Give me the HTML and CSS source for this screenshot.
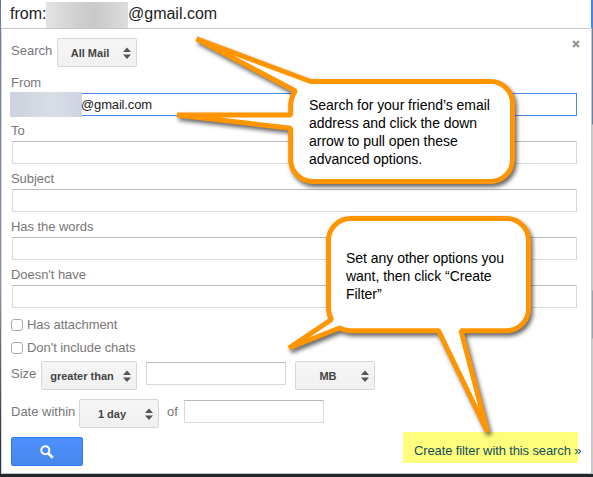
FILE: index.html
```
<!DOCTYPE html>
<html lang="en">
<head>
<meta charset="utf-8">
<title>Search options</title>
<link rel="stylesheet" href="styles.css">
</head>
<body>
<div class="page">
  <div class="query"><span class="prefix">from:</span><span class="redacted"></span><span>@gmail.com</span></div>
  <form class="panel">
    <div class="row scope">
      <span class="label">Search</span>
      <div class="select"><b>All Mail</b><svg class="arrows" viewBox="0 0 8 12"><path d="M0 5 4 0.5 8 5zM0 7.5h8L4 12z"/></svg></div>
      <svg class="close" viewBox="0 0 8 8"><path d="M1 1 7 7M7 1 1 7"/></svg>
    </div>
    <div class="field"><span class="label">From</span><div class="input focused"><span class="redacted small"></span><span>@gmail.com</span></div></div>
    <div class="field"><span class="label">To</span><div class="input"></div></div>
    <div class="field"><span class="label">Subject</span><div class="input"></div></div>
    <div class="field"><span class="label">Has the words</span><div class="input"></div></div>
    <div class="field"><span class="label">Doesn't have</span><div class="input"></div></div>
    <div class="check first"><span class="box"></span><span>Has attachment</span></div>
    <div class="check"><span class="box"></span><span>Don't include chats</span></div>
    <div class="row size">
      <span class="label">Size</span>
      <div class="select wide"><b>greater than</b><svg class="arrows" viewBox="0 0 8 12"><path d="M0 5 4 0.5 8 5zM0 7.5h8L4 12z"/></svg></div>
      <div class="input short"></div>
      <div class="select"><b>MB</b><svg class="arrows" viewBox="0 0 8 12"><path d="M0 5 4 0.5 8 5zM0 7.5h8L4 12z"/></svg></div>
    </div>
    <div class="row date">
      <span class="label">Date within</span>
      <div class="select"><b>1 day</b><svg class="arrows" viewBox="0 0 8 12"><path d="M0 5 4 0.5 8 5zM0 7.5h8L4 12z"/></svg></div>
      <span class="label of">of</span>
      <div class="input short"></div>
    </div>
    <div class="actions">
      <div class="submit"><svg viewBox="0 0 14 14"><circle cx="5.3" cy="5.2" r="4" fill="none" stroke="#fff" stroke-width="2"/><path d="M8.2 8.2 12.8 12.8" stroke="#fff" stroke-width="2.7"/></svg></div>
      <div class="create"><span>Create filter with this search »</span></div>
    </div>
  </form>
</div>
<svg class="callouts" viewBox="0 0 593 477">
  <path d="M196.500 38.800 310.500 81.500H490.500A22 22 0 0 1 512.500 103.500V159.500A22 22 0 0 1 490.500 181.500H312.700A22 22 0 0 1 290.700 159.500V128.300L177 115H290.700V106Q291 96 295.500 91Z"/>
  <path d="M289 348 331.500 319.500Q328.500 314 328.500 308V240.500A22 22 0 0 1 350.500 218.500H506.500A22 22 0 0 1 528.500 240.500V308.700A22 22 0 0 1 506.500 330.700H461L487.500 432 438.500 330.700H350Q345 330.700 339.500 328Z"/>
</svg>
<div class="note one">Search for your friend’s email<br>address and click the down<br>arrow to pull open these<br>advanced options.</div>
<div class="note two">Set any other options you<br>want, then click “Create<br>Filter”</div>
</body>
</html>
```
FILE: styles.css
```
* { box-sizing: border-box; }
body {
  margin: 0;
  width: 593px;
  height: 477px;
  overflow: hidden;
  position: relative;
  font-family: "Liberation Sans", Arial, sans-serif;
  font-size: 13px;
  color: #777;
  background: linear-gradient(#20262b, #20262b) 0 474px / 593px 3px no-repeat,
    linear-gradient(#4285f4, #4285f4) 591px 0 / 2px 28px no-repeat,
    linear-gradient(#6682a5 0 124px, #ccc 125px 290px, #9aa5b2 291px 338px, #ccc 339px) 592px 0 / 1px 477px no-repeat,
    linear-gradient(#63789a, #8793ab 290px, #6f6870 350px, #263547 450px) 0 0 / 1px 477px no-repeat,
    #fff;
}
.page { width: 590px; margin-left: 1px; height: 474px; background: #fff; display: flex; flex-direction: column; }
.query { height: 28px; padding-left: 9px; display: flex; align-items: center; font-size: 16px; line-height: 28px; color: #222; }
.prefix { width: 36px; white-space: nowrap; }
.redacted { width: 82px; height: 26px; align-self: flex-end; background: linear-gradient(90deg, #e3e3e3, #cfcfcf 40%, #c9c9c9 60%, #ddd); }
.panel { width: 591px; height: 446px; border: 1px solid #c6c6c6; border-left-color: #d8d8d8; padding-left: 9px; }
.row { display: flex; align-items: flex-start; }
.label { line-height: 16px; white-space: nowrap; }
.scope { height: 48px; padding-top: 9px; }
.scope .label { width: 46px; padding-top: 5px; }
.close { width: 8px; height: 8px; margin: 2px 0 0 435px; fill: none; stroke: #999; stroke-width: 2.4; }
.select {
  width: 80px; height: 29px; flex: none;
  border: 1px solid #d6d6d6; border-radius: 2px;
  background: linear-gradient(#f6f6f6, #f0f0f0);
  display: flex; align-items: center; justify-content: space-between;
  padding: 0 5px 0 0;
  font-size: 11px; color: #444;
}
.select b { flex: 1; text-align: center; padding-right: 1px; }
.arrows { width: 8px; height: 12px; fill: #555; }
.wide { width: 96px; }
.field { height: 48px; display: flex; flex-direction: column; letter-spacing: -0.05px; }
.field .label { height: 16px; margin-top: -2px; margin-bottom: 2px; }
.input { width: 565px; height: 23px; margin-left: 1px; border: 1px solid #d9d9d9; border-top-color: #b9b9b9; background: #fff; flex: none; }
.focused { border-color: #4d8ae8; display: flex; align-items: center; color: #222; letter-spacing: -0.15px; }
.small { width: 72px; height: 25px; align-self: center; flex: none; margin: 0 -1px 0 -3px; background: linear-gradient(90deg, #ccd3de, #d9dde4 60%, #cdd4e2); }
.check { height: 23px; display: flex; align-items: center; line-height: 16px; letter-spacing: -0.05px; }
.first { margin-top: -4px; }
.box { width: 12px; height: 12px; border: 1px solid #aaa; border-radius: 3px; margin-right: 4px; background: #fff; }
.size { height: 40px; padding-top: 2px; }
.size .label { width: 30px; padding-top: 5px; }
.short { width: 140px; margin: 1px 9px 0 9px; }
.date { height: 38px; }
.date .label { width: 68px; padding-top: 5px; }
.date .of { width: 25px; padding-left: 8px; }
.date .short { margin-left: 0; }
.actions { display: flex; align-items: flex-start; }
.submit { width: 72px; height: 29px; border: 1px solid #3079ed; border-radius: 2px; background: linear-gradient(#4d90fe, #4787ed); display: flex; align-items: center; justify-content: center; }
.submit svg { width: 14px; height: 14px; }
.create { width: 175px; height: 31px; margin: -5px 0 0 320px; padding: 11px 0 0 11px; background: #fffd7c; color: #12505a; line-height: 16px; white-space: nowrap; letter-spacing: -0.12px; }
.callouts { position: absolute; left: 0; top: 0; width: 593px; height: 477px; fill: #fff; stroke: #ff9500; stroke-width: 5; stroke-linejoin: bevel; filter: drop-shadow(2px 3px 2px rgba(0,0,0,.6)); }
.note { position: absolute; line-height: 18px; font-size: 14px; color: #000; white-space: nowrap; letter-spacing: -0.03px; }
.one { left: 309px; top: 96px; }
.two { left: 346px; top: 249px; }
```
